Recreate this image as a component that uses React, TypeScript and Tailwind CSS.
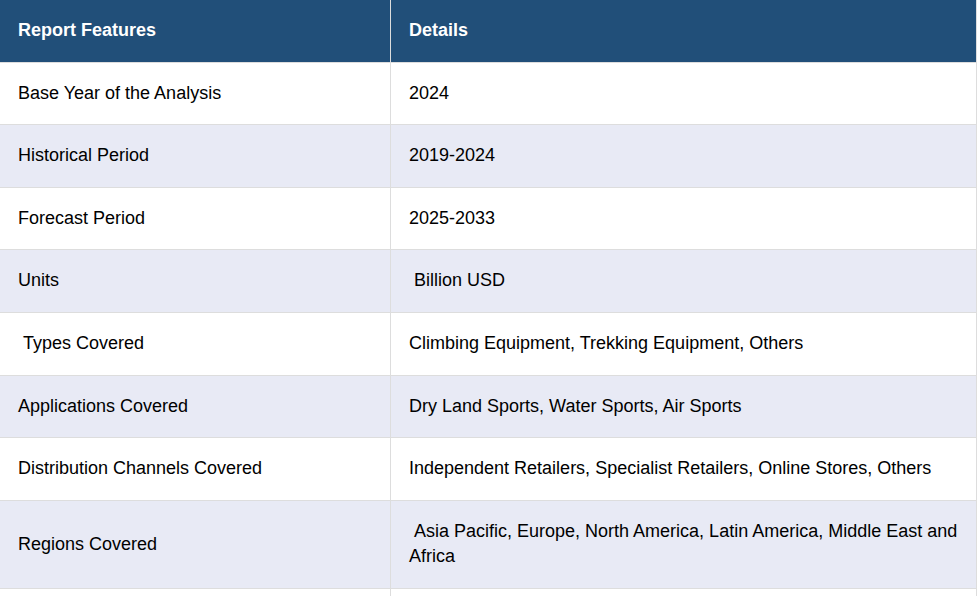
import React from "react";

const rows: [string, string][] = [
  ["Base Year of the Analysis", "2024"],
  ["Historical Period", "2019-2024"],
  ["Forecast Period", "2025-2033"],
  ["Units", "\u00a0Billion USD"],
  ["\u00a0Types Covered", "Climbing Equipment, Trekking Equipment, Others"],
  ["Applications Covered", "Dry Land Sports, Water Sports, Air Sports"],
  ["Distribution Channels Covered", "Independent Retailers, Specialist Retailers, Online Stores, Others"],
  ["Regions Covered", "\u00a0Asia Pacific, Europe, North America, Latin America, Middle East and Africa"],
  ["\u00a0", "\u00a0"],
];

export default function App() {
  return (
    <div className="w-[980px] h-[596px] overflow-hidden bg-white" style={{ fontFamily: '"Liberation Sans", Arial, sans-serif' }}>
      <div className="w-[977px] border-r border-[#dddddd] text-[18px] leading-[25.6px] text-black">
        <div className="flex bg-[#214f79] text-white font-bold border-b border-[#dddddd]">
          <div className="w-[391px] shrink-0 border-r border-[#dddddd] p-[18px]">Report Features</div>
          <div className="flex-1 p-[18px]">Details</div>
        </div>
        {rows.map(([a, b], i) => (
          <div
            key={i}
            className={`flex border-b border-[#dddddd] ${i % 2 === 1 ? "bg-[#e8eaf5]" : "bg-white"}`}
          >
            <div className="w-[391px] shrink-0 border-r border-[#dddddd] px-[18px] py-[18px] flex items-center">{a}</div>
            <div className="flex-1 min-w-0 p-[18px]">{b}</div>
          </div>
        ))}
      </div>
    </div>
  );
}
